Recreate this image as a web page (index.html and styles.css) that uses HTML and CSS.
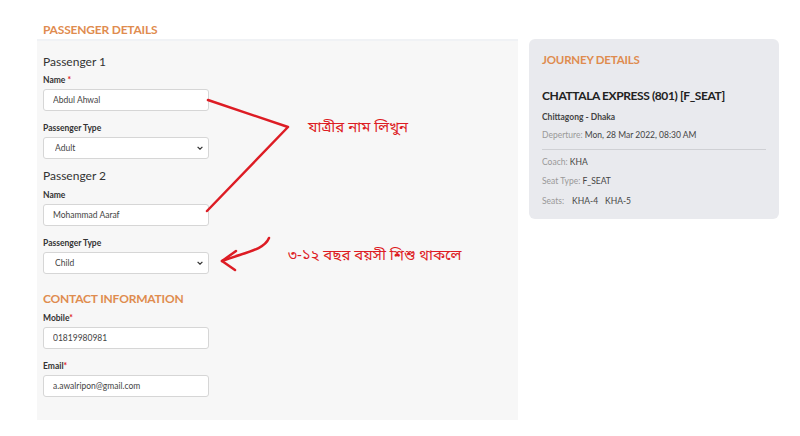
FILE: index.html
```html
<!DOCTYPE html>
<html lang="en">
<head>
  <meta charset="UTF-8" />
  <title>Passenger Details</title>
  <link rel="stylesheet" href="styles.css">
</head>
<body>
  <div class="page">
    <div class="booking">
      <h2 class="section-title">PASSENGER DETAILS</h2>

      <div class="panel">
        <h3 class="passenger-title">Passenger 1</h3>
        <div class="form-group">
          <label>Name <span class="req">*</span></label>
          <input type="text" value="Abdul Ahwal" />
        </div>
        <div class="form-group">
          <label>Passenger Type</label>
          <div class="select-wrap">
            <select><option>Adult</option></select>
            <svg class="chevron" viewBox="0 0 10 6"><path d="M1 1l4 4 4-4" /></svg>
          </div>
        </div>

        <h3 class="passenger-title">Passenger 2</h3>
        <div class="form-group">
          <label>Name</label>
          <input type="text" value="Mohammad Aaraf" />
        </div>
        <div class="form-group">
          <label>Passenger Type</label>
          <div class="select-wrap">
            <select><option>Child</option></select>
            <svg class="chevron" viewBox="0 0 10 6"><path d="M1 1l4 4 4-4" /></svg>
          </div>
        </div>

        <h2 class="section-title contact-title">CONTACT INFORMATION</h2>
        <div class="form-group">
          <label>Mobile<span class="req">*</span></label>
          <input type="text" value="01819980981" />
        </div>
        <div class="form-group">
          <label>Email<span class="req">*</span></label>
          <input type="text" value="a.awalripon@gmail.com" />
        </div>
      </div>
    </div>

    <aside class="journey">
      <h2 class="section-title">JOURNEY DETAILS</h2>
      <div class="train-name">CHATTALA EXPRESS (801) [F_SEAT]</div>
      <div class="route">Chittagong - Dhaka</div>
      <div class="info"><span class="muted">Deperture:</span> Mon, 28 Mar 2022, 08:30 AM</div>
      <hr />
      <div class="info"><span class="muted">Coach:</span> KHA</div>
      <div class="info"><span class="muted">Seat Type:</span> F_SEAT</div>
      <div class="info seats"><span class="muted">Seats:</span><span class="seat">KHA-4</span><span class="seat">KHA-5</span></div>
    </aside>
  </div>

  <!-- hand drawn notes over the form -->
  <svg class="notes" viewBox="0 0 800 436">
    <path d="M208 100 L288 127 L207 211" />
    <path d="M269 238 C264 250 246 252 222 261" />
    <path d="M236 251 L222 261 L235 270" />
  </svg>
  <div class="note note-name">যাত্রীর নাম লিখুন</div>
  <div class="note note-child">৩-১২ বছর বয়সী শিশু থাকলে</div>
</body>
</html>
```

FILE: styles.css
```css
* {
  box-sizing: border-box;
  margin: 0;
  padding: 0;
}

body {
  background: #fff;
  font-family: Lato, "Liberation Sans", sans-serif;
  color: #333;
  width: 800px;
  height: 436px;
  position: relative;
  overflow: hidden;
}

.page {
  display: flex;
  gap: 11px;
  padding-left: 37px;
}

.booking {
  width: 481px;
}

.section-title {
  color: #df8c4f;
  font-size: 12px;
  font-weight: 700;
  letter-spacing: -0.2px;
  height: 39px;
  padding: 22px 0 0 6px;
}

.panel {
  display: flex;
  flex-direction: column;
  background: #f7f7f7;
  border-top: 2px solid #f0f2f5;
  height: 381px;
  padding: 13px 0 0 6px;
}

.passenger-title {
  font-size: 12px;
  font-weight: 400;
  color: #333;
  margin-bottom: 6px;
}

.form-group + .passenger-title {
  margin: 1px 0 7px;
}

.form-group {
  margin-bottom: 8px;
}

.form-group + .form-group {
  margin-top: 4px;
}

label {
  display: block;
  font-size: 8.5px;
  font-weight: 700;
  color: #333;
  margin-bottom: 4px;
}

.req {
  color: #e02020;
}

input,
select {
  display: block;
  width: 166px;
  height: 22px;
  border: 1px solid #d6d6d6;
  border-radius: 3px;
  background: #fff;
  font-family: Lato, "Liberation Sans", sans-serif;
  font-size: 8.5px;
  color: #444;
  padding: 0 9px;
  outline: none;
}

select {
  appearance: none;
  padding-left: 11px;
}

.select-wrap {
  position: relative;
  width: 166px;
}

.chevron {
  position: absolute;
  right: 6px;
  top: 9px;
  width: 6px;
  height: 4px;
  fill: none;
  stroke: #333;
  stroke-width: 2;
}

.contact-title {
  height: auto;
  padding: 9px 0 0 0;
  margin-bottom: 7px;
}

.journey {
  margin-top: 39px;
  width: 250px;
  height: 180px;
  background: #e9eaee;
  border-radius: 6px;
  padding: 0 13px;
}

.journey .section-title {
  padding: 14px 0 0 0;
  height: 49px;
  font-size: 11.5px;
}

.train-name {
  font-size: 12px;
  font-weight: 700;
  letter-spacing: -0.4px;
  color: #222;
  margin-bottom: 9px;
}

.route {
  font-size: 8.5px;
  font-weight: 700;
  color: #444;
  margin-bottom: 8px;
}

.info {
  font-size: 8.5px;
  color: #444;
  margin-bottom: 9px;
}

.muted {
  color: #999;
}

hr {
  border: none;
  border-top: 1px solid #cfd0d4;
  margin: 0 0 7px;
}

.seats {
  margin-top: 10px;
}

.seat {
  margin-left: 7px;
}

.muted + .seat {
  margin-left: 8px;
}

.notes {
  position: absolute;
  left: 0;
  top: 0;
  width: 800px;
  height: 436px;
  fill: none;
  stroke: #dd1c24;
  stroke-width: 2.5;
  stroke-linecap: round;
  stroke-linejoin: round;
}

.note {
  position: absolute;
  color: #dd1c24;
  font-family: "Noto Sans Bengali", "Noto Serif Bengali", "Lohit Bengali", "FreeSerif", sans-serif;
  font-size: 15px;
  white-space: nowrap;
}

.note-name {
  left: 308px;
  top: 118px;
}

.note-child {
  left: 288px;
  top: 246px;
}
```
